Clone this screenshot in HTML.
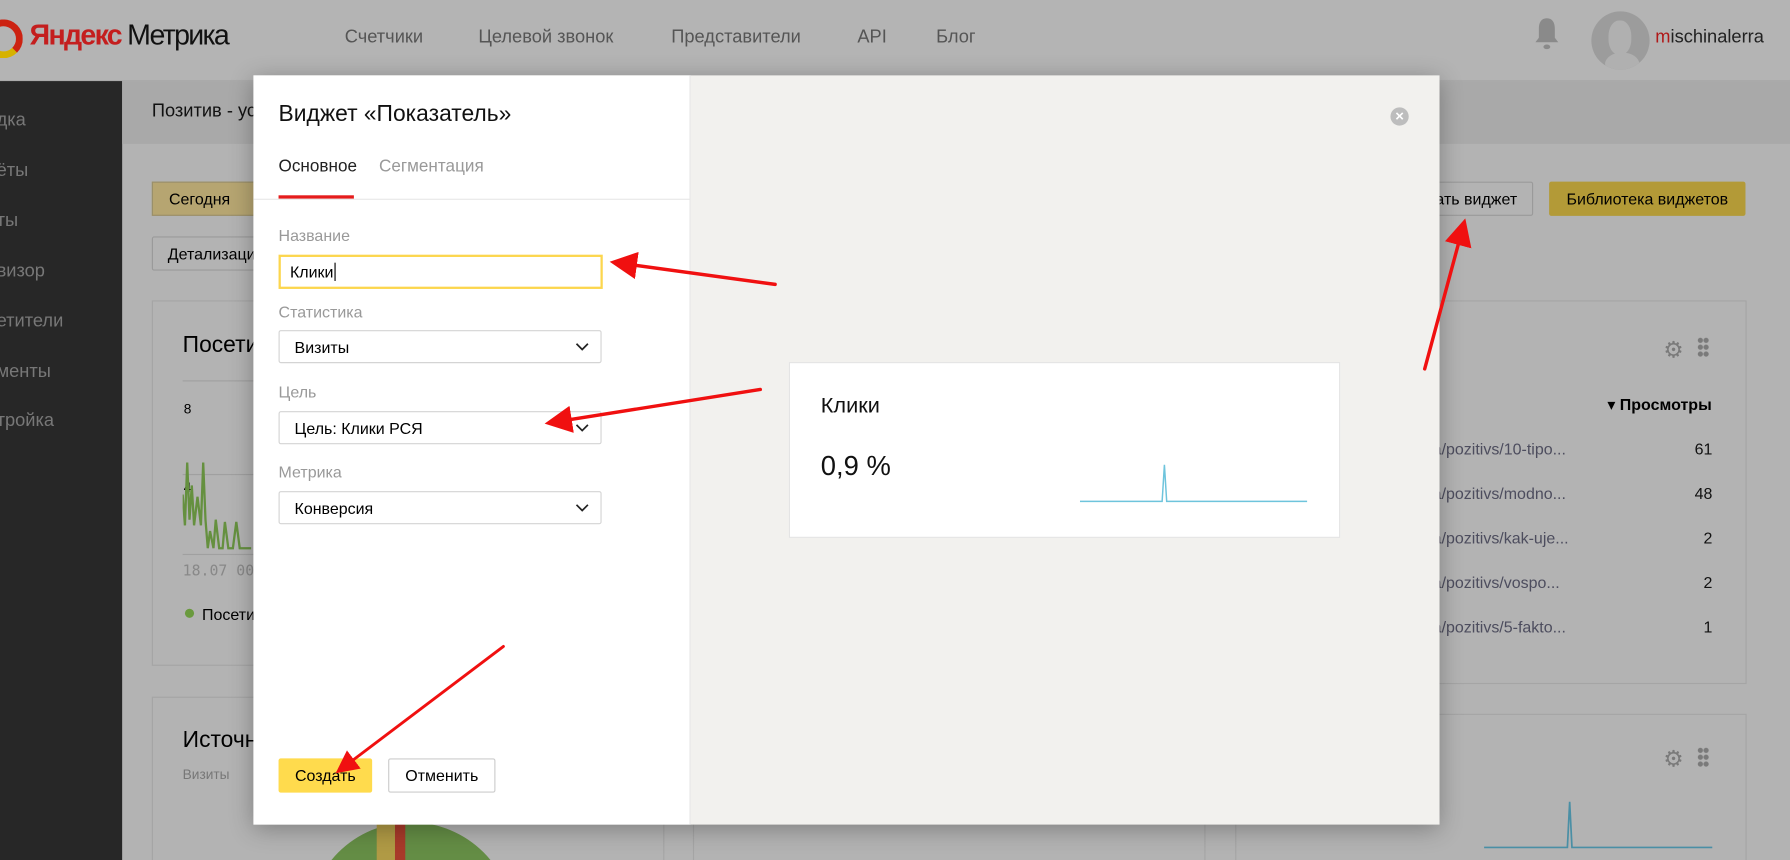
<!DOCTYPE html>
<html><head><meta charset="utf-8"><style>
html,body{margin:0;padding:0;width:1790px;height:860px;overflow:hidden;background:#b3b3b3}
#s{position:absolute;left:0;top:0;width:1568px;height:753px;transform:scale(1.14158,1.1421);transform-origin:0 0;font-family:"Liberation Sans","DejaVu Sans",sans-serif;color:#000;background:#b3b3b3;overflow:hidden}
.a{position:absolute}
.nav{font-size:16px;color:#555;top:24px}
.side{font-size:16px;color:#777}
.card{position:absolute;border:1px solid #a5a5a5;background:#b3b3b3}
.lbl{position:absolute;left:22px;font-size:14px;color:#999}
.sel{position:absolute;left:22px;width:283px;height:29px;border:1px solid #d4d4d4;border-radius:2px;background:#fff;font-size:14px;line-height:29px;box-sizing:border-box;padding-left:13px;color:#000}
.sel svg{position:absolute;right:10px;top:10px}
.url{position:absolute;left:1255px;font-size:14px;color:#4d4d5e;white-space:nowrap}
.num{position:absolute;right:68px;font-size:14px;color:#111;text-align:right}
</style></head><body><div id="s">
<div class="a" style="left:0;top:0;width:1568px;height:70px;background:#b4b4b4;border-bottom:1px solid #aaa"></div>
<div class="a" style="left:-14px;top:17px;width:22px;height:22px;border-radius:50%;border:6px solid #c21;border-bottom-color:#d6b200;border-left-color:#d6b200"></div>
<div class="a" style="left:26px;top:17px;font-size:25px;letter-spacing:-1.5px;color:#111;transform:scaleX(1.0);transform-origin:0 0;white-space:nowrap"><span style="color:#c41e1e;font-weight:bold">Яндекс</span> Метрика</div>
<div class="a nav" style="left:302px">Счетчики</div>
<div class="a nav" style="left:419px">Целевой звонок</div>
<div class="a nav" style="left:588px">Представители</div>
<div class="a nav" style="left:751px">API</div>
<div class="a nav" style="left:820px">Блог</div>
<svg class="a" style="left:1344px;top:14px" width="22" height="32" viewBox="0 0 22 32"><path d="M11 2c-5 0-7 4-7 9v8l-3 4h20l-3-4v-8c0-5-2-9-7-9z" fill="#8a8a8a"/><ellipse cx="11" cy="27" rx="3" ry="2" fill="#8a8a8a"/></svg>
<div class="a" style="left:1394px;top:10px;width:51px;height:51px;border-radius:50%;background:#9c9c9c;overflow:hidden"><div class="a" style="left:15px;top:8px;width:20px;height:30px;border-radius:45%;background:#b0b0b0"></div><div class="a" style="left:12px;top:36px;width:30px;height:20px;border-radius:50%;background:#b0b0b0"></div></div>
<div class="a" style="left:1450px;top:24px;font-size:16px;color:#222"><span style="color:#b01818">m</span>ischinalerra</div>
<div class="a" style="left:0;top:71px;width:107px;height:682px;background:#272727"></div>
<div class="a side" style="left:-3px;top:97px">дка</div>
<div class="a side" style="left:-3px;top:141px">ёты</div>
<div class="a side" style="left:-3px;top:185px">ты</div>
<div class="a side" style="left:-3px;top:229px">визор</div>
<div class="a side" style="left:-3px;top:273px">етители</div>
<div class="a side" style="left:-3px;top:317px">менты</div>
<div class="a side" style="left:-3px;top:360px">тройка</div>
<div class="a" style="left:107px;top:71px;width:1461px;height:55px;background:#a9a9a9"></div>
<div class="a" style="left:133px;top:89px;font-size:16px;color:#111">Позитив - ус</div>
<div class="a" style="left:133px;top:159px;width:90px;height:30px;background:#b6a571;border:1px solid #9a8f6a;box-sizing:border-box;font-size:14px;line-height:28px;padding-left:14px">Сегодня</div>
<div class="a" style="left:133px;top:207px;width:100px;height:30px;border:1px solid #9a9a9a;border-radius:2px;box-sizing:border-box;font-size:14px;line-height:28px;padding-left:13px">Детализаци</div>
<div class="a" style="left:1230px;top:159px;width:113px;height:30px;border:1px solid #9a9a9a;border-radius:2px;box-sizing:border-box;font-size:14px;line-height:28px;text-align:right;padding-right:13px">ать виджет</div>
<div class="a" style="left:1357px;top:159px;width:172px;height:30px;background:#b39a37;border-radius:2px;font-size:14px;line-height:30px;text-align:center">Библиотека виджетов</div>
<div class="card" style="left:133px;top:263px;width:470px;height:318px"></div>
<div class="a" style="left:160px;top:291px;font-size:20px">Посети</div>
<div class="a" style="left:160px;top:333px;width:70px;border-top:1px solid #a0a0a0"></div>
<div class="a" style="left:161px;top:351px;font-size:12px">8</div>
<div class="a" style="left:160px;top:415px;width:70px;border-top:1px solid #a0a0a0"></div>
<div class="a" style="left:161px;top:420px;font-size:12px">4</div>
<svg class="a" style="left:160px;top:395px" width="70" height="90"><polyline points="0,38 2,65 4,10 6,60 8,30 10,65 13,40 16,65 18,10 20,60 22,85 24,70 27,85 29,60 32,85 35,85 37,62 40,85 44,85 47,62 50,85 55,85 60,85" fill="none" stroke="#65903f" stroke-width="2"/></svg>
<div class="a" style="left:160px;top:485px;width:70px;border-top:1px solid #a0a0a0"></div>
<div class="a" style="left:160px;top:493px;font-size:13px;color:#888;font-family:'DejaVu Sans Mono',monospace">18.07 00:</div>
<div class="a" style="left:162px;top:533px;width:8px;height:8px;border-radius:50%;background:#6a9a3e"></div>
<div class="a" style="left:177px;top:530px;font-size:14px">Посети</div>
<div class="card" style="left:133px;top:610px;width:447px;height:160px"></div>
<div class="a" style="left:160px;top:637px;font-size:20px">Источн</div>
<div class="a" style="left:160px;top:671px;font-size:12px;color:#777">Визиты</div>
<div class="a" style="left:270px;top:720px;width:180px;height:180px;border-radius:50%;background:#648d45"></div>
<div class="a" style="left:330px;top:720px;width:22px;height:40px;background:#b09a45"></div>
<div class="a" style="left:346px;top:720px;width:9px;height:40px;background:#a83a2a"></div>
<div class="card" style="left:607px;top:720px;width:447px;height:50px"></div>
<div class="card" style="left:1082px;top:263px;width:446px;height:334px"></div>
<div class="a" style="left:1457px;top:294px;font-size:20px;color:#7a7a7a">⚙</div>
<div class="a" style="left:1487px;top:295px;width:10px;height:18px;background:radial-gradient(circle,#7a7a7a 2px,transparent 2.5px) 0 0/5px 6px"></div>
<div class="a" style="left:1408px;top:346px;font-size:14px;font-weight:bold">▾ Просмотры</div>
<div class="url" style="top:385px">a/pozitivs/10-tipo...</div><div class="num" style="top:385px">61</div>
<div class="url" style="top:424px">a/pozitivs/modno...</div><div class="num" style="top:424px">48</div>
<div class="url" style="top:463px">a/pozitivs/kak-uje...</div><div class="num" style="top:463px">2</div>
<div class="url" style="top:502px">a/pozitivs/vospo...</div><div class="num" style="top:502px">2</div>
<div class="url" style="top:541px">a/pozitivs/5-fakto...</div><div class="num" style="top:541px">1</div>
<div class="card" style="left:1082px;top:625px;width:446px;height:150px"></div>
<div class="a" style="left:1457px;top:652px;font-size:20px;color:#7a7a7a">⚙</div>
<div class="a" style="left:1487px;top:654px;width:10px;height:18px;background:radial-gradient(circle,#7a7a7a 2px,transparent 2.5px) 0 0/5px 6px"></div>
<svg class="a" style="left:1300px;top:700px" width="200" height="45"><polyline points="0,42 73,42 75,2 77,42 200,42" fill="none" stroke="#4a8fa5" stroke-width="1.5"/></svg>
<div class="a" style="left:222px;top:66px;width:1039px;height:656px;background:#f2f1ee;box-shadow:0 4px 20px rgba(0,0,0,.3)"></div>
<div class="a" style="left:222px;top:66px;width:382px;height:656px;background:#fff;border-right:1px solid #e6e6e6"></div>
<div class="a" style="left:244px;top:89px;font-size:20px;color:#111">Виджет «Показатель»</div>
<div class="a" style="left:244px;top:137px;font-size:15px;color:#222">Основное</div>
<div class="a" style="left:332px;top:137px;font-size:15px;color:#999">Сегментация</div>
<div class="a" style="left:244px;top:171px;width:66px;height:3px;background:#e51c1c"></div>
<div class="a" style="left:222px;top:174px;width:382px;border-top:1px solid #e8e8e8"></div>
<div class="a" style="left:222px;top:0;width:382px;height:753px;pointer-events:none">
<div class="lbl" style="top:198px">Название</div>
<div class="a" style="left:22px;top:223px;width:284px;height:30px;border:2px solid #fcd64e;box-sizing:border-box;font-size:14px;line-height:26px;padding-left:8px">Клики<span style="border-left:1px solid #000;margin-left:1px"></span></div>
<div class="lbl" style="top:265px">Статистика</div>
<div class="sel" style="top:289px">Визиты<svg width="12" height="8"><path d="M1 1l5 5 5-5" fill="none" stroke="#222" stroke-width="1.5"/></svg></div>
<div class="lbl" style="top:335px">Цель</div>
<div class="sel" style="top:360px">Цель: Клики РСЯ<svg width="12" height="8"><path d="M1 1l5 5 5-5" fill="none" stroke="#222" stroke-width="1.5"/></svg></div>
<div class="lbl" style="top:405px">Метрика</div>
<div class="sel" style="top:430px">Конверсия<svg width="12" height="8"><path d="M1 1l5 5 5-5" fill="none" stroke="#222" stroke-width="1.5"/></svg></div>
<div class="a" style="left:22px;top:664px;width:82px;height:30px;background:#ffdb4d;border-radius:2px;font-size:14px;line-height:30px;text-align:center">Создать</div>
<div class="a" style="left:118px;top:664px;width:94px;height:30px;border:1px solid #ccc;border-radius:2px;box-sizing:border-box;background:#fff;font-size:14px;line-height:28px;text-align:center">Отменить</div>
</div>
<div class="a" style="left:1218px;top:94px;width:16px;height:16px;border-radius:50%;background:#bdbdbd;color:#fff;font-size:13px;font-weight:bold;line-height:16px;text-align:center">×</div>
<div class="a" style="left:691px;top:317px;width:483px;height:154px;background:#fff;border:1px solid #e4e4e4;box-sizing:border-box"></div>
<div class="a" style="left:719px;top:345px;font-size:19px;color:#111">Клики</div>
<div class="a" style="left:719px;top:395px;font-size:24px;color:#111">0,9 %</div>
<svg class="a" style="left:946px;top:404px" width="200" height="36"><polyline points="0,35 72,35 74,3 76,35 199,35" fill="none" stroke="#6ec4dc" stroke-width="1.3"/></svg>
<svg class="a" style="left:0;top:0" width="1568" height="753">
<defs><marker id="m" markerWidth="8" markerHeight="8" refX="6" refY="4" orient="auto" markerUnits="strokeWidth"><path d="M0,0 L8,4 L0,8 z" fill="#f01010"/></marker></defs>
<g stroke="#f01010" stroke-width="3" fill="none" stroke-linecap="round">
<line x1="679" y1="249" x2="540" y2="230" marker-end="url(#m)"/>
<line x1="666" y1="341" x2="483" y2="370" marker-end="url(#m)"/>
<line x1="441" y1="566" x2="298" y2="674" marker-end="url(#m)" stroke-width="2.5"/>
<line x1="1248" y1="323" x2="1282" y2="197" marker-end="url(#m)"/>
</g></svg>
</div></body></html>
